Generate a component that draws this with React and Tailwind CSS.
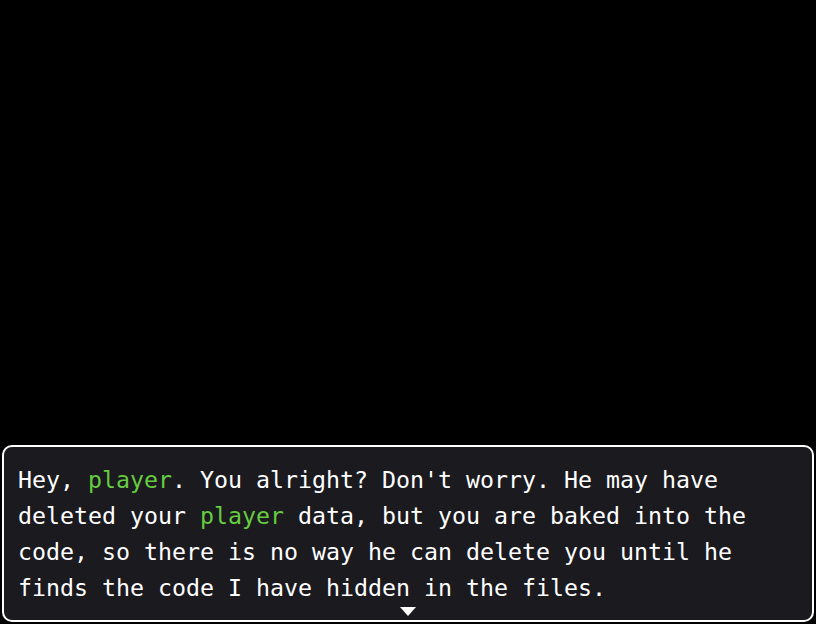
const lines = [
  [["Hey, "], ["player", true], [". You alright? Don't worry. He may have"]],
  [["deleted your "], ["player", true], [" data, but you are baked into the"]],
  [["code, so there is no way he can delete you until he"]],
  [["finds the code I have hidden in the files."]],
];

export default function App() {
  return (
    <div className="h-[624px] w-[816px] bg-black flex flex-col justify-end px-[2px] pb-[2px]">
      <div className="relative h-[177px] rounded-[10px] border-2 border-white bg-[#1b1a1f] pl-[14px] pt-[15px]">
        <div className="font-['DejaVu_Sans_Mono',monospace] text-[23.25px] leading-[36px] text-white">
          {lines.map((line, i) => (
            <div key={i} className="whitespace-pre">
              {line.map(([t, hi], j) => (
                <span key={j} className={hi ? "text-[#66cc40]" : ""}>
                  {t}
                </span>
              ))}
            </div>
          ))}
        </div>
        <div className="absolute bottom-[4px] left-1/2 -translate-x-1/2 h-0 w-0 border-l-[8px] border-r-[8px] border-t-[9px] border-l-transparent border-r-transparent border-t-white" />
      </div>
    </div>
  );
}
